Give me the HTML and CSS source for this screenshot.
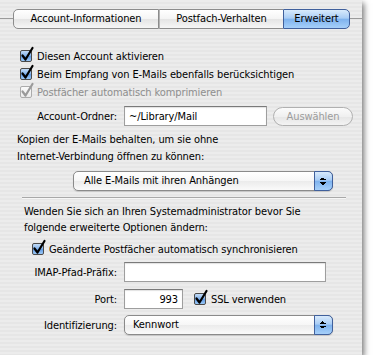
FILE: index.html
```html
<!DOCTYPE html>
<html lang="de">
<head>
    <meta charset="UTF-8">
    <title>Erweitert</title>
    <link rel="stylesheet" href="styles.css">
</head>
<body>
    <div class="panel">
        <div class="tabbar">
            <span class="tab first">Account-Informationen</span>
            <span class="tab mid">Postfach-Verhalten</span>
            <span class="tab last active">Erweitert</span>
        </div>

        <div class="checks">
            <div class="check"><span class="box on"><svg class="tick" viewBox="0 0 14 15"><path d="M2.5 8.5 L5.5 12.5 L12.5 1"/></svg></span>Diesen Account aktivieren</div>
            <div class="check"><span class="box on"><svg class="tick" viewBox="0 0 14 15"><path d="M2.5 8.5 L5.5 12.5 L12.5 1"/></svg></span>Beim Empfang von E-Mails ebenfalls berücksichtigen</div>
            <div class="check off"><span class="box dim"><svg class="tick" viewBox="0 0 14 15"><path d="M2.5 8.5 L5.5 12.5 L12.5 1"/></svg></span>Postfächer automatisch komprimieren</div>
        </div>

        <div class="row folder">
            <span class="lbl">Account-Ordner:</span>
            <span class="field path">~/Library/Mail</span>
            <span class="button">Auswählen</span>
        </div>

        <p class="note first-note">Kopien der E-Mails behalten, um sie ohne<br>Internet-Verbindung öffnen zu können:</p>

        <div class="popup keep">Alle E-Mails mit ihren Anhängen<span class="arrows"></span></div>

        <div class="sep"></div>

        <p class="note admin">Wenden Sie sich an Ihren Systemadministrator bevor Sie<br>folgende erweiterte Optionen ändern:</p>

        <div class="check sync"><span class="box on"><svg class="tick" viewBox="0 0 14 15"><path d="M2.5 8.5 L5.5 12.5 L12.5 1"/></svg></span>Geänderte Postfächer automatisch synchronisieren</div>

        <div class="row imap">
            <span class="lbl">IMAP-Pfad-Präfix:</span>
            <span class="field prefix"></span>
        </div>

        <div class="row port">
            <span class="lbl">Port:</span>
            <span class="field num">993</span>
            <div class="check ssl"><span class="box on"><svg class="tick" viewBox="0 0 14 15"><path d="M2.5 8.5 L5.5 12.5 L12.5 1"/></svg></span>SSL verwenden</div>
        </div>

        <div class="row ident">
            <span class="lbl">Identifizierung:</span>
            <div class="popup auth">Kennwort<span class="arrows"></span></div>
        </div>
    </div>
</body>
</html>
```

FILE: styles.css
```css
body {
    margin: 0;
    background: #ffffff;
    font-family: "DejaVu Sans Condensed", "DejaVu Sans", "Liberation Sans", sans-serif;
    font-size: 11px;
    letter-spacing: -0.1px;
    color: #000;
}
.panel {
    width: 362px;
    height: 355px;
    background: repeating-linear-gradient(#ececec 0, #ececec 2px, #e6e6e6 2px, #e6e6e6 4px);
    box-shadow: 2px 3px 6px rgba(0, 0, 0, 0.55);
    overflow: hidden;
}

/* tabs */
.tabbar {
    display: flex;
    margin-top: 9px;
    height: 20px;
    padding-left: 13px;
    background: linear-gradient(#9a9a9a, #9a9a9a) 0 9px / 100% 1px no-repeat;
}
.tab {
    box-sizing: border-box;
    height: 20px;
    line-height: 18px;
    text-align: center;
    border: 1px solid #8c8c8c;
    background: linear-gradient(#ffffff, #f4f4f4 50%, #e4e4e4 51%, #f6f6f6);
}
.tab.first {
    width: 146px;
    border-radius: 5px 0 0 5px;
}
.tab.mid {
    width: 124px;
    border-left: 1px solid #b4b4b4;
    border-right: none;
}
.tab.last {
    width: 67px;
    border-radius: 0 5px 5px 0;
}
.tab.active {
    border-color: #40609c;
    background: linear-gradient(#d8eafc, #a9cdf5 45%, #7fb3ee 52%, #a6d0fa);
}

/* checkboxes */
.checks {
    margin-top: 18px;
    padding-left: 20px;
}
.check {
    display: flex;
    align-items: center;
    height: 18px;
    white-space: nowrap;
}
.check.off {
    color: #8e8e8e;
}
.box {
    position: relative;
    flex: none;
    box-sizing: border-box;
    width: 12px;
    height: 12px;
    margin-right: 5px;
    border: 1px solid #4a4a4a;
    border-radius: 2px;
    background: linear-gradient(#c3dcf7, #7fb0ea 50%, #5d98e3 51%, #9cc9f7);
}
.box.dim {
    border-color: #ababab;
    background: linear-gradient(#fafafa, #ececec);
}
.tick {
    position: absolute;
    left: -1px;
    top: -4px;
    width: 14px;
    height: 15px;
    overflow: visible;
}
.tick path {
    fill: none;
    stroke: #000;
    stroke-width: 2.2;
    stroke-linecap: round;
    stroke-linejoin: round;
}
.box.dim .tick path {
    stroke: #9a9a9a;
}

/* label rows */
.row {
    display: flex;
    align-items: center;
}
.lbl {
    width: 117px;
    text-align: right;
    margin-right: 7px;
    flex: none;
}
.field {
    box-sizing: border-box;
    height: 20px;
    line-height: 19px;
    padding: 0 4px;
    background: #fff;
    border: 1px solid #9e9e9e;
    border-top-color: #7a7a7a;
    box-shadow: inset 0 1px 1px rgba(0, 0, 0, 0.12);
}
.folder {
    margin-top: 5px;
}
.path {
    width: 143px;
}
.button {
    box-sizing: border-box;
    width: 80px;
    height: 19px;
    line-height: 17px;
    margin-left: 6px;
    text-align: center;
    color: #9c9c9c;
    border: 1px solid #b0b0b0;
    border-radius: 10px;
    background: linear-gradient(#fbfbfb, #f0f0f0 50%, #e6e6e6 51%, #f3f3f3);
}

.note {
    margin: 0;
    line-height: 17px;
}
.first-note {
    margin-top: 5px;
    padding-left: 17px;
}

/* popups */
.popup {
    position: relative;
    box-sizing: border-box;
    height: 20px;
    line-height: 18px;
    padding-left: 10px;
    border: 1px solid #8a8a8a;
    border-radius: 5px;
    background: linear-gradient(#ffffff, #f6f6f6 50%, #ebebeb 51%, #fafafa);
    box-shadow: 0 1px 1px rgba(0, 0, 0, 0.15);
}
.arrows {
    position: absolute;
    right: -1px;
    top: -1px;
    width: 19px;
    height: 20px;
    box-sizing: border-box;
    border: 1px solid #40609c;
    border-radius: 0 5px 5px 0;
    background:
        linear-gradient(to bottom right, transparent 50%, #000 50%) 5px 5px / 3px 3px no-repeat,
        linear-gradient(to bottom left, transparent 50%, #000 50%) 8px 5px / 3px 3px no-repeat,
        linear-gradient(to top right, transparent 50%, #000 50%) 5px 10px / 3px 3px no-repeat,
        linear-gradient(to top left, transparent 50%, #000 50%) 8px 10px / 3px 3px no-repeat,
        linear-gradient(#d8eafc, #a9cdf5 45%, #7fb3ee 52%, #a6d0fa);
}
.keep {
    width: 260px;
    margin: 6px 0 0 73px;
}

.sep {
    height: 1px;
    margin: 6px 16px 0 22px;
    background: #a8a8a8;
    border-bottom: 1px solid #f6f6f6;
}

.admin {
    margin-top: 5px;
    padding-left: 24px;
    line-height: 16px;
}
.sync {
    margin-top: 3px;
    padding-left: 32px;
    height: 20px;
}

.imap {
    margin-top: 3px;
}
.prefix {
    width: 202px;
}
.port {
    margin-top: 7px;
}
.num {
    width: 59px;
    text-align: right;
}
.ssl {
    margin-left: 11px;
}
.ident {
    margin-top: 6px;
}
.auth {
    width: 209px;
    padding-left: 8px;
}
```
